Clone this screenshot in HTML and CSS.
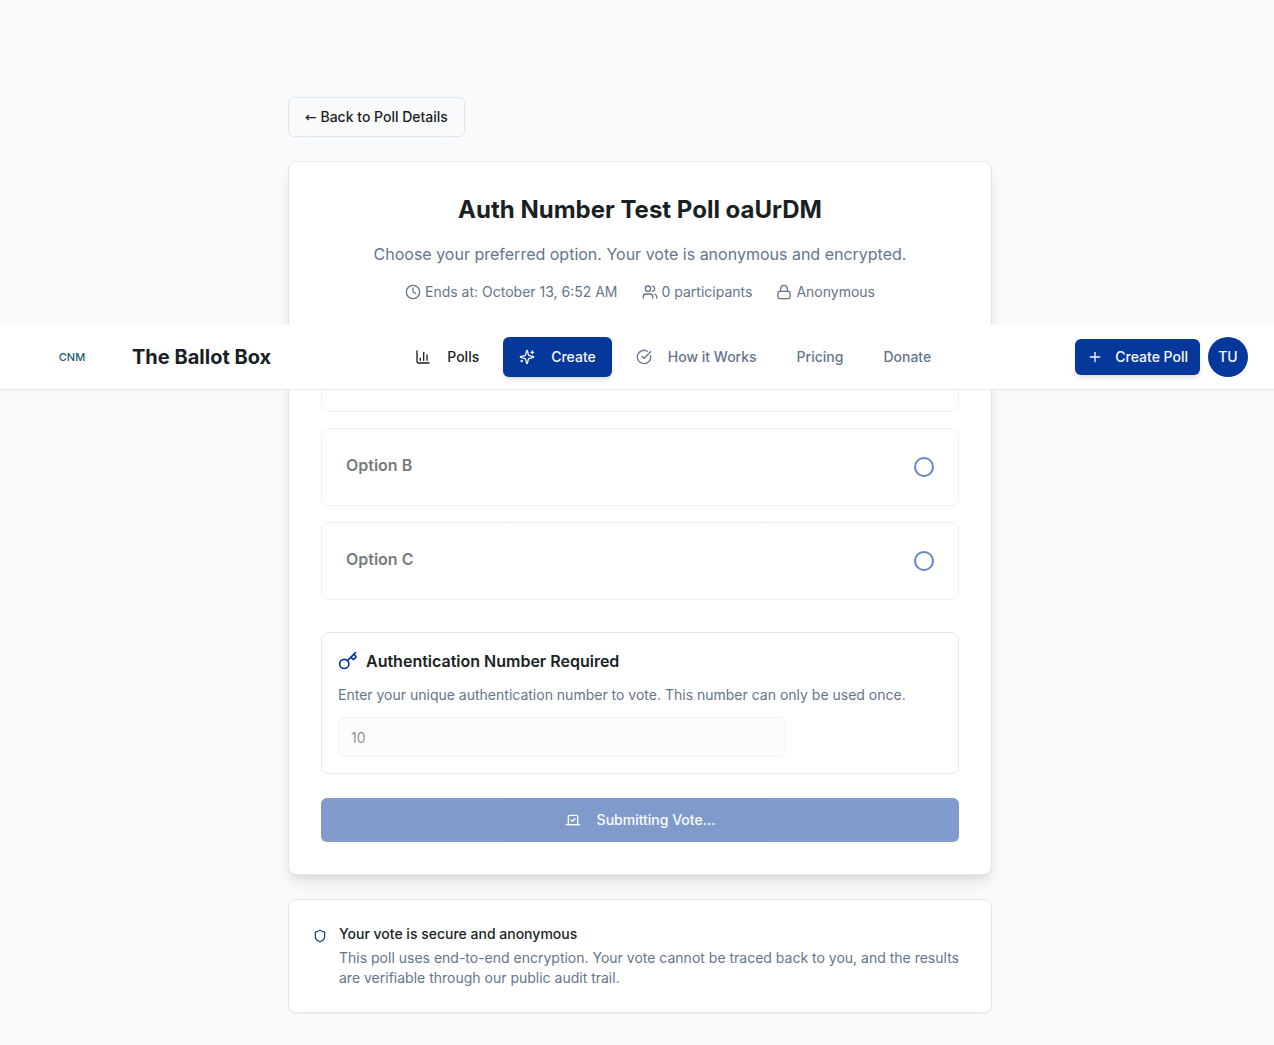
FILE: index.html
```
<!DOCTYPE html>
<html lang="en">
<head>
<meta charset="utf-8">
<meta name="viewport" content="width=device-width, initial-scale=1">
<title>Auth Number Test Poll oaUrDM - The Ballot Box</title>
<link rel="stylesheet" href="styles.css">
</head>
<body>
<header class="site-header">
  <a class="brand" href="#">
    <span class="brand-mark">CNM</span>
    <span class="brand-name">The Ballot Box</span>
  </a>
  <nav class="nav">
    <a class="nav-link nav-link-dark" href="#">
      <svg class="icon" viewBox="0 0 24 24"><path d="M3 3v16a2 2 0 0 0 2 2h16"/><path d="M18 17V9"/><path d="M13 17V5"/><path d="M8 17v-3"/></svg>
      Polls
    </a>
    <a class="nav-link nav-link-active" href="#">
      <svg class="icon" viewBox="0 0 24 24"><path d="M9.937 15.5A2 2 0 0 0 8.5 14.063l-6.135-1.582a.5.5 0 0 1 0-.962L8.5 9.936A2 2 0 0 0 9.937 8.5l1.582-6.135a.5.5 0 0 1 .963 0L14.063 8.5A2 2 0 0 0 15.5 9.937l6.135 1.581a.5.5 0 0 1 0 .964L15.5 14.063a2 2 0 0 0-1.437 1.437l-1.582 6.135a.5.5 0 0 1-.963 0z"/><path d="M20 3v4"/><path d="M22 5h-4"/><path d="M4 17v2"/><path d="M5 18H3"/></svg>
      Create
    </a>
    <a class="nav-link" href="#">
      <svg class="icon" viewBox="0 0 24 24"><path d="M21.801 10A10 10 0 1 1 17 3.335"/><path d="m9 11 3 3L22 4"/></svg>
      How it Works
    </a>
    <a class="nav-link" href="#">Pricing</a>
    <a class="nav-link" href="#">Donate</a>
  </nav>
  <div class="account">
    <button class="create-button" type="button">
      <svg class="icon" viewBox="0 0 24 24"><path d="M5 12h14"/><path d="M12 5v14"/></svg>
      Create Poll
    </button>
    <button class="avatar" type="button">TU</button>
  </div>
</header>

<main class="page">
  <div class="column">
    <button class="back-button" type="button"><span class="arrow">←</span> Back to Poll Details</button>

    <form class="card ballot">
      <div class="ballot-header">
        <h1 class="ballot-title">Auth Number Test Poll oaUrDM</h1>
        <p class="ballot-intro">Choose your preferred option. Your vote is anonymous and encrypted.</p>
        <div class="meta">
          <span class="meta-item">
            <svg class="icon" viewBox="0 0 24 24"><circle cx="12" cy="12" r="10"/><path d="M12 6v6l4 2"/></svg>
            Ends at: October 13, 6:52 AM
          </span>
          <span class="meta-item">
            <svg class="icon" viewBox="0 0 24 24"><path d="M16 21v-2a4 4 0 0 0-4-4H6a4 4 0 0 0-4 4v2"/><circle cx="9" cy="7" r="4"/><path d="M22 21v-2a4 4 0 0 0-3-3.87"/><path d="M16 3.13a4 4 0 0 1 0 7.75"/></svg>
            0 participants
          </span>
          <span class="meta-item">
            <svg class="icon" viewBox="0 0 24 24"><rect x="3" y="11" width="18" height="11" rx="2"/><path d="M7 11V7a5 5 0 0 1 10 0v4"/></svg>
            Anonymous
          </span>
        </div>
      </div>

      <div class="options">
        <label class="option"><span class="option-name">Option A</span><input class="option-radio" type="radio" name="vote" disabled></label>
        <label class="option"><span class="option-name">Option B</span><input class="option-radio" type="radio" name="vote" disabled></label>
        <label class="option"><span class="option-name">Option C</span><input class="option-radio" type="radio" name="vote" disabled></label>
      </div>

      <section class="auth">
        <label class="auth-label" for="auth-number">
          <svg class="icon icon-key" viewBox="0 0 24 24"><path d="m15.5 7.5 2.3 2.3a1 1 0 0 0 1.4 0l2.1-2.1a1 1 0 0 0 0-1.4L19 4"/><path d="m21 2-9.6 9.6"/><circle cx="7.5" cy="15.5" r="5.5"/></svg>
          Authentication Number Required
        </label>
        <p class="auth-help">Enter your unique authentication number to vote. This number can only be used once.</p>
        <input class="auth-input" id="auth-number" type="text" value="10" disabled>
      </section>

      <button class="submit-button" type="submit" disabled>
        <svg class="icon" viewBox="0 0 24 24"><path d="m9 12 2 2 4-4"/><path d="M5 7c0-1.1.9-2 2-2h10a2 2 0 0 1 2 2v12H5V7Z"/><path d="M22 19H2"/></svg>
        Submitting Vote...
      </button>
    </form>

    <section class="card notice">
      <svg class="icon icon-shield" viewBox="0 0 24 24"><path d="M20 13c0 5-3.5 7.5-7.66 8.95a1 1 0 0 1-.67-.01C7.5 20.5 4 18 4 13V6a1 1 0 0 1 1-1c2 0 4.5-1.2 6.24-2.72a1.17 1.17 0 0 1 1.52 0C14.51 3.81 17 5 19 5a1 1 0 0 1 1 1z"/></svg>
      <div>
        <h2 class="notice-title">Your vote is secure and anonymous</h2>
        <p class="notice-text">This poll uses end-to-end encryption. Your vote cannot be traced back to you, and the results are verifiable through our public audit trail.</p>
      </div>
    </section>
  </div>
</main>
</body>
</html>
```
FILE: styles.css
```
:root {
  --primary: #06379b;
  --ink: #1a1f24;
  --muted: #65758b;
  --line: #e1e7ef;
  --surface: #f9fafc;
}

*, *::before, *::after { box-sizing: border-box; }

body {
  margin: 0;
  background: var(--surface);
  color: var(--ink);
  font-family: Inter, "Liberation Sans", sans-serif;
  font-size: 14px;
  line-height: 20px;
}

h1, h2, p { margin: 0; }
a { color: inherit; text-decoration: none; }
button, input { font: inherit; margin: 0; }
button { border: 0; cursor: pointer; }

.icon {
  width: 16px;
  height: 16px;
  flex: none;
  fill: none;
  stroke: currentColor;
  stroke-width: 2;
  stroke-linecap: round;
  stroke-linejoin: round;
}

/* Floating site header, drawn over the ballot */
.site-header {
  position: absolute;
  z-index: 10;
  top: 325px;
  left: 0;
  right: 0;
  display: flex;
  align-items: center;
  justify-content: space-between;
  padding: 12px 26px 12px 32px;
  background: #fff;
  border-bottom: 1px solid var(--line);
}

.brand { display: flex; align-items: center; gap: 20px; }
.brand-mark {
  width: 80px;
  text-align: center;
  font-size: 11px;
  font-weight: 500;
  color: #1b5975;
}
.brand-name { font-size: 20px; line-height: 28px; font-weight: 700; }

.nav { display: flex; align-items: center; gap: 8px; }
.nav-link {
  display: flex;
  align-items: center;
  gap: 16px;
  height: 40px;
  padding: 0 16px;
  border-radius: 6px;
  font-weight: 500;
  color: var(--muted);
}
.nav-link-dark { color: var(--ink); }
.nav-link-active {
  background: var(--primary);
  color: #f8fafc;
  box-shadow: 0 4px 6px -1px rgba(0, 0, 0, .1), 0 2px 4px -2px rgba(0, 0, 0, .1);
}

.account { display: flex; align-items: center; gap: 8px; }
.create-button {
  display: flex;
  align-items: center;
  gap: 12px;
  height: 36px;
  padding: 0 12px;
  border-radius: 6px;
  background: var(--primary);
  color: #f8fafc;
  font-weight: 500;
  box-shadow: 0 4px 6px -1px rgba(0, 0, 0, .1), 0 2px 4px -2px rgba(0, 0, 0, .1);
}
.avatar {
  width: 40px;
  height: 40px;
  padding: 0;
  border-radius: 50%;
  background: var(--primary);
  color: #f8fafc;
  font-weight: 500;
}

/* Ballot column */
.page { padding: 97px 0 32px 6px; }
.column {
  display: flex;
  flex-direction: column;
  align-items: stretch;
  gap: 24px;
  max-width: 704px;
  margin: 0 auto;
}
.back-button {
  align-self: flex-start;
  height: 40px;
  padding: 0 16px;
  border: 1px solid var(--line);
  border-radius: 6px;
  background: var(--surface);
  color: var(--ink);
  font-weight: 500;
}
.arrow { font-family: "DejaVu Sans", sans-serif; }
.card {
  background: #fff;
  border: 1px solid var(--line);
  border-radius: 8px;
}
.ballot {
  padding: 32px;
  box-shadow: 0 10px 15px -3px rgba(0, 0, 0, .1), 0 4px 6px -4px rgba(0, 0, 0, .1);
}
.ballot-header {
  display: flex;
  flex-direction: column;
  gap: 16px;
  text-align: center;
}
.ballot-title { font-size: 24px; line-height: 32px; font-weight: 700; }
.ballot-intro { font-size: 16px; line-height: 24px; color: var(--muted); }
.meta { display: flex; justify-content: center; gap: 24px; color: var(--muted); }
.meta-item { display: flex; align-items: center; gap: 4px; }

.options { display: flex; flex-direction: column; gap: 16px; margin-top: 32px; }
.option {
  display: flex;
  align-items: center;
  justify-content: space-between;
  padding: 24px;
  border: 1px solid var(--line);
  border-radius: 8px;
  opacity: .6;
}
.option-name { padding-bottom: 4px; font-size: 16px; line-height: 24px; font-weight: 600; }
.option-radio {
  appearance: none;
  width: 20px;
  height: 20px;
  border: 2px solid var(--primary);
  border-radius: 50%;
}

.auth {
  margin-top: 32px;
  padding: 16px;
  border: 1px solid var(--line);
  border-radius: 8px;
}
.auth-label {
  display: flex;
  align-items: center;
  gap: 8px;
  font-size: 16px;
  line-height: 24px;
  font-weight: 600;
}
.icon-key { width: 20px; height: 20px; color: var(--primary); }
.auth-help { margin: 12px 0; color: var(--muted); }
.auth-input {
  display: block;
  width: 100%;
  max-width: 448px;
  height: 40px;
  padding: 0 12px;
  border: 1px solid var(--line);
  border-radius: 6px;
  background: var(--surface);
  color: var(--ink);
  opacity: .5;
}

.submit-button {
  display: flex;
  align-items: center;
  justify-content: center;
  gap: 16px;
  width: 100%;
  height: 44px;
  margin-top: 24px;
  border-radius: 6px;
  background: var(--primary);
  color: #f8fafc;
  font-weight: 500;
  opacity: .5;
}

.notice {
  display: flex;
  gap: 12px;
  padding: 24px;
  box-shadow: 0 1px 2px rgba(0, 0, 0, .05);
}
.icon-shield { width: 14px; margin-top: 4px; color: var(--primary); }
.notice-title { font-size: 14px; line-height: 20px; font-weight: 500; }
.notice-text { margin-top: 4px; color: var(--muted); }
```
